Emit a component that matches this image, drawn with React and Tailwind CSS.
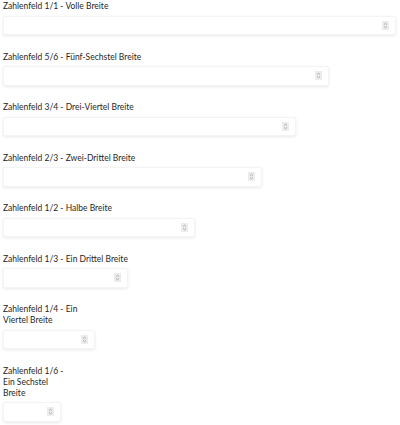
import React from 'react'

const FIELDS = [
  { label: 'Zahlenfeld 1/1 - Volle Breite', width: 'w-full' },
  { label: 'Zahlenfeld 5/6 - Fünf-Sechstel Breite', width: 'w-5/6' },
  { label: 'Zahlenfeld 3/4 - Drei-Viertel Breite', width: 'w-3/4' },
  { label: 'Zahlenfeld 2/3 - Zwei-Drittel Breite', width: 'w-2/3' },
  { label: 'Zahlenfeld 1/2 - Halbe Breite', width: 'w-1/2' },
  { label: 'Zahlenfeld 1/3 - Ein Drittel Breite', width: 'w-1/3' },
  { label: 'Zahlenfeld 1/4 - Ein Viertel Breite', width: 'w-1/4' },
  { label: 'Zahlenfeld 1/6 - Ein Sechstel Breite', width: 'w-1/6' },
]

const Spinner = () => (
  <span className="flex h-[9px] w-[7px] shrink-0 items-center justify-center bg-[#ececec]">
    <svg width="5" height="7" viewBox="0 0 5 7" fill="none" stroke="#9a9a9a" strokeWidth="0.8">
      <path d="M1 2.6 L2.5 1.2 L4 2.6" />
      <path d="M1 4.4 L2.5 5.8 L4 4.4" />
    </svg>
  </span>
)

const NumberField = ({ label, width }) => (
  <div className={`${width} px-[4.5px] pb-[15.5px]`}>
    <label className="-mr-[4px] block pt-[1px] text-[8.5px] leading-[11px] text-[#1f1f1f]">{label}</label>
    <div className="mt-[3.5px] flex h-[19.5px] items-center rounded-[2px] border border-[#f4f4f4] bg-white pr-[6px] shadow-[0_1px_3px_rgba(0,0,0,0.09)]">
      <input
        type="text"
        inputMode="numeric"
        className="min-w-0 flex-1 bg-transparent px-[4px] text-[8px] outline-none"
      />
      <Spinner />
    </div>
  </div>
)

export default function App() {
  return (
    <div className="w-[400px] overflow-hidden bg-white" style={{ fontFamily: 'Lato, "Noto Sans", sans-serif' }}>
      <div className="-ml-[1.5px] flex w-[402px] flex-col">
        {FIELDS.map((f) => (
          <NumberField key={f.label} {...f} />
        ))}
      </div>
    </div>
  )
}
